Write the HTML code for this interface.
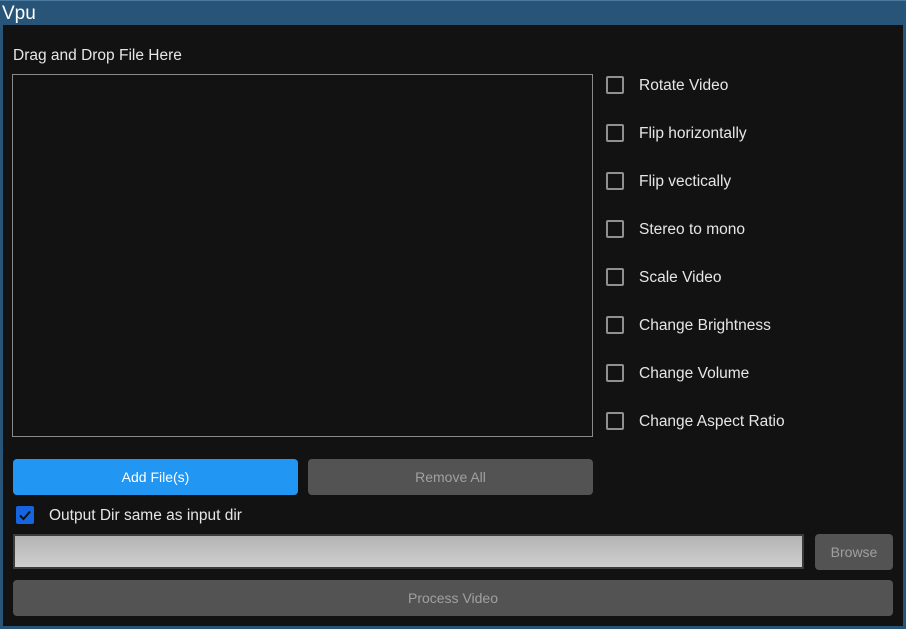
<!DOCTYPE html>
<html><head><style>
*{margin:0;padding:0;box-sizing:border-box}
body{width:906px;height:629px;background:#285577;font-family:"Liberation Sans",sans-serif;position:relative;overflow:hidden}
.title{position:absolute;left:0;top:0;width:906px;height:25px;background:#285577;border-top:1px solid #4a7aa0;color:#fff;font-size:19px;line-height:25px;padding-left:2px;font-weight:300}
.main{position:absolute;left:3px;top:25px;width:900px;height:601px;background:#121212}
.abs{position:absolute}
.t{color:#e6e6e6;font-size:15.5px}
.drop{left:12px;top:74px;width:581px;height:363px;border:1px solid #8a8a8a;background:#121212}
.cb{width:18px;height:18px;border:2px solid #909090;border-radius:2px}
.btn{border-radius:4px;font-size:14px;text-align:center}
</style></head><body>
<div class="title">Vpu</div>
<div class="main"></div>
<div class="abs t" style="left:13px;top:47px">Drag and Drop File Here</div>
<div class="abs drop"></div>

<div class="abs cb" style="left:606px;top:76px"></div><div class="abs t" style="left:639px;top:77px">Rotate Video</div>
<div class="abs cb" style="left:606px;top:124px"></div><div class="abs t" style="left:639px;top:125px">Flip horizontally</div>
<div class="abs cb" style="left:606px;top:172px"></div><div class="abs t" style="left:639px;top:173px">Flip vectically</div>
<div class="abs cb" style="left:606px;top:220px"></div><div class="abs t" style="left:639px;top:221px">Stereo to mono</div>
<div class="abs cb" style="left:606px;top:268px"></div><div class="abs t" style="left:639px;top:269px">Scale Video</div>
<div class="abs cb" style="left:606px;top:316px"></div><div class="abs t" style="left:639px;top:317px">Change Brightness</div>
<div class="abs cb" style="left:606px;top:364px"></div><div class="abs t" style="left:639px;top:365px">Change Volume</div>
<div class="abs cb" style="left:606px;top:412px"></div><div class="abs t" style="left:639px;top:413px">Change Aspect Ratio</div>

<div class="abs btn" style="left:13px;top:459px;width:285px;height:36px;background:#2196f3;color:#fff;line-height:36px">Add File(s)</div>
<div class="abs btn" style="left:308px;top:459px;width:285px;height:36px;background:#535353;color:#a0a0a0;line-height:36px">Remove All</div>

<div class="abs" style="left:16px;top:506px;width:18px;height:18px;background:#1565e0;border-radius:2px">
<svg width="18" height="18" viewBox="0 0 18 18"><path d="M4 9.5 L7.5 13 L14 5.5" stroke="#111" stroke-width="2" fill="none"/></svg></div>
<div class="abs t" style="left:49px;top:507px">Output Dir same as input dir</div>

<div class="abs" style="left:13px;top:534px;width:791px;height:35px;border:2px solid #3c3c3c;background:linear-gradient(#b4b4b4,#cfcfcf)"></div>
<div class="abs btn" style="left:815px;top:534px;width:78px;height:36px;background:#535353;color:#a0a0a0;line-height:36px">Browse</div>
<div class="abs btn" style="left:13px;top:580px;width:880px;height:36px;background:#535353;color:#a0a0a0;line-height:36px">Process Video</div>
</body></html>
